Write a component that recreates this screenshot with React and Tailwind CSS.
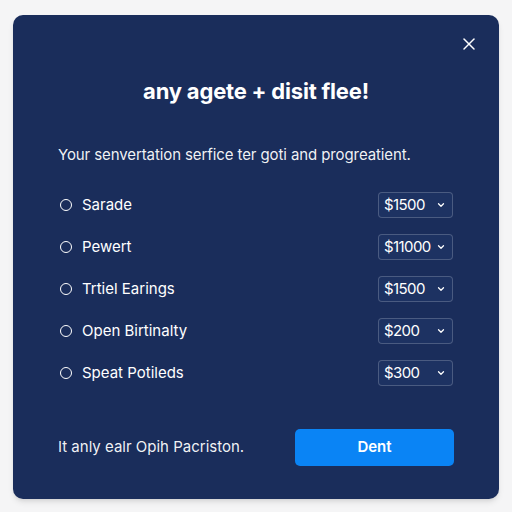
import React from "react";
import { X, ChevronDown } from "lucide-react";

const rows = [
  { label: "Sarade", value: "$1500" },
  { label: "Pewert", value: "$11000" },
  { label: "Trtiel Earings", value: "$1500" },
  { label: "Open Birtinalty", value: "$200" },
  { label: "Speat Potileds", value: "$300" },
];

export default function App() {
  return (
    <div
      className="w-[512px] h-[512px] bg-[#f5f5f6] p-[13px] pt-[15px]"
      style={{ fontFamily: "Inter, 'Liberation Sans', sans-serif" }}
    >
      <div className="relative w-[486px] h-[484px] bg-[#1a2d5b] rounded-[10px] shadow-md text-white px-[45px]">
        <button className="absolute right-[20px] top-[19px] text-white">
          <X className="w-[20px] h-[20px]" strokeWidth={1.8} />
        </button>
        <h1 className="pt-[62px] text-center text-[22px] font-bold leading-[28px] tracking-[-0.2px]">
          any agete + disit flee!
        </h1>
        <p className="mt-[40px] text-[15px] leading-[20px] text-white/95 tracking-[-0.1px]">
          Your senvertation serfice ter goti and progreatient.
        </p>
        <div className="mt-[27px] flex flex-col gap-[16px]">
          {rows.map((r) => (
            <div key={r.label} className="flex items-center justify-between h-[26px]">
              <div className="flex items-center gap-[10px] pl-[2px]">
                <span className="w-[12px] h-[12px] rounded-full border-[1.5px] border-white" />
                <span className="text-[15px] text-white">{r.label}</span>
              </div>
              <div className="w-[75px] h-[26px] mr-[1px] flex items-center justify-between pl-[5px] pr-[6px] rounded-[4px] border border-white/20 bg-[#1d3262]">
                <span className="text-[15px] tracking-[-0.6px]">{r.value}</span>
                <ChevronDown className="w-[10px] h-[10px] shrink-0" strokeWidth={3} />
              </div>
            </div>
          ))}
        </div>
        <div className="mt-[43px] flex items-center justify-between">
          <span className="text-[15px] text-white/95">It anly ealr Opih Pacriston.</span>
          <button className="w-[159px] h-[37px] rounded-[5px] bg-[#0a84f5] text-[15px] font-semibold text-white">
            Dent
          </button>
        </div>
      </div>
    </div>
  );
}
